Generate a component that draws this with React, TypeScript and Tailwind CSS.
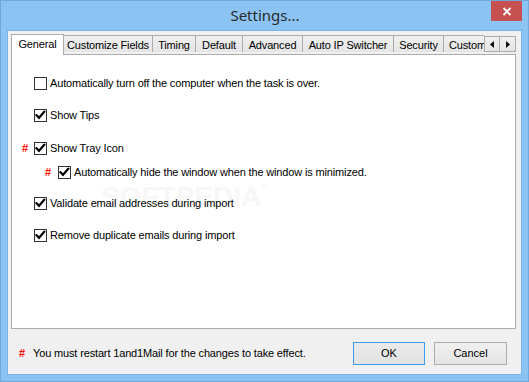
import React from "react";

const font = { fontFamily: '"Liberation Sans", Arial, sans-serif' };

function Check({ checked }: { checked: boolean }) {
  return (
    <div className="w-[13px] h-[13px] border border-[#333333] bg-white flex items-center justify-center shrink-0">
      {checked && (
        <svg width="11" height="11" viewBox="0 0 11 11">
          <path d="M1.5 5.2 L4 7.8 L9.2 1.8" fill="none" stroke="#000" strokeWidth="2.2" strokeLinecap="square" strokeLinejoin="miter" />
        </svg>
      )}
    </div>
  );
}

function Mark({ w }: { w: string }) {
  return <span className={`${w} text-[#ff0000] font-bold text-[11px] leading-none shrink-0`}>#</span>;
}

function Row({
  label,
  checked,
  pad,
  mark,
  mt,
}: {
  label: string;
  checked: boolean;
  pad: string;
  mark?: string;
  mt: string;
}) {
  return (
    <div className={`flex items-center h-[13px] ${pad} ${mt}`}>
      {mark && <Mark w={mark} />}
      <Check checked={checked} />
      <span className="ml-[3px] text-[11px] leading-none tracking-[-0.15px] text-black whitespace-nowrap">{label}</span>
    </div>
  );
}

function Tab({ label, w }: { label: string; w: string }) {
  return (
    <div
      className={`${w} h-[17px] shrink-0 border-t border-r border-[#acacac] bg-gradient-to-b from-[#f0f0f0] to-[#e5e5e5] flex items-center justify-center text-[11px] leading-none tracking-[-0.15px] text-black whitespace-nowrap pt-[2px]`}
    >
      {label}
    </div>
  );
}

export default function App() {
  return (
    <div
      className="w-[529px] h-[382px] bg-[#8bc4f3] border border-[#6fa9dc] flex flex-col select-none"
      style={font}
    >
      {/* Title bar */}
      <div className="h-[29px] relative flex items-center justify-center shrink-0">
        <span
          className="text-[15px] text-[#2a2a2a] leading-none pb-[1px] pl-[1px]"
          style={{ fontFamily: '"Noto Sans", "Open Sans", sans-serif' }}
        >
          Settings...
        </span>
        <div className="absolute top-0 right-[6px] w-[31px] h-[20px] bg-[#c75050] flex items-center justify-center">
          <svg width="10" height="9" viewBox="0 0 10 9">
            <path d="M1.5 1 L8.5 8 M8.5 1 L1.5 8" stroke="#fff" strokeWidth="1.8" />
          </svg>
        </div>
      </div>

      {/* Client area */}
      <div className="mx-[6px] mb-[6px] flex-1 border border-[#79b4e6] bg-[#f0f0f0] flex flex-col">
        <div className="pt-[3px] pl-[3px] pr-[5px] flex flex-col">
          {/* Tab strip */}
          <div className="h-[20px] flex items-end">
            <div className="w-[473px] h-[21px] flex items-end overflow-hidden -mb-[1px] relative z-10">
              <div className="w-[53px] h-[21px] shrink-0 border-l border-t border-r border-[#acacac] bg-white flex items-start justify-center pt-[4px] text-[11px] leading-none tracking-[-0.15px] text-black">
                General
              </div>
              <div className="h-[20px] flex items-start">
                <div className="flex">
                  <Tab label="Customize Fields" w="w-[89px]" />
                  <Tab label="Timing" w="w-[43px]" />
                  <Tab label="Default" w="w-[47px]" />
                  <Tab label="Advanced" w="w-[60px]" />
                  <Tab label="Auto IP Switcher" w="w-[91px]" />
                  <Tab label="Security" w="w-[50px]" />
                  <div className="w-[60px] h-[17px] shrink-0 border-t border-[#acacac] bg-gradient-to-b from-[#f0f0f0] to-[#e5e5e5] flex items-center pl-[5px] text-[11px] leading-none tracking-[-0.15px] text-black whitespace-nowrap pt-[2px]">
                    Custom Fields
                  </div>
                </div>
              </div>
            </div>
            <div className="self-start mt-[2px] flex">
              <div className="w-[16px] h-[16px] border border-[#acacac] bg-gradient-to-b from-[#f0f0f0] to-[#e5e5e5] flex items-center justify-center">
                <svg width="4" height="7" viewBox="0 0 4 7">
                  <path d="M4 0 L0 3.5 L4 7 Z" fill="#000" />
                </svg>
              </div>
              <div className="w-[16px] h-[16px] border border-l-0 border-[#acacac] bg-gradient-to-b from-[#f0f0f0] to-[#e5e5e5] flex items-center justify-center">
                <svg width="4" height="7" viewBox="0 0 4 7">
                  <path d="M0 0 L4 3.5 L0 7 Z" fill="#000" />
                </svg>
              </div>
            </div>
          </div>

          {/* Panel */}
          <div className="h-[275px] border border-[#acacac] bg-white relative flex flex-col">
            <div className="absolute left-[89px] top-[128px] text-[28px] font-bold leading-none text-[#f7f7f7] whitespace-nowrap">
              SOFTPEDIA<span className="text-[8px] align-top">®</span>
            </div>
            <div className="relative flex flex-col">
              <Row label="Automatically turn off the computer when the task is over." checked={false} pad="pl-[22px]" mt="mt-[22px]" />
              <Row label="Show Tips" checked pad="pl-[22px]" mt="mt-[19px]" />
              <Row label="Show Tray Icon" checked pad="pl-[10px]" mark="w-[12px]" mt="mt-[20px]" />
              <Row label="Automatically hide the window when the window is minimized." checked pad="pl-[33px]" mark="w-[13px]" mt="mt-[11px]" />
              <Row label="Validate email addresses during import" checked pad="pl-[22px]" mt="mt-[18px]" />
              <Row label="Remove duplicate emails during import" checked pad="pl-[22px]" mt="mt-[19px]" />
            </div>
          </div>
        </div>

        {/* Bottom row */}
        <div className="mt-[13px] pl-[11px] pr-[14px] flex items-center h-[23px]">
          <Mark w="w-[14px]" />
          <span className="text-[11px] leading-none tracking-[-0.15px] text-black">
            You must restart 1and1Mail for the changes to take effect.
          </span>
          <div className="flex-1" />
          <div className="w-[72px] h-[23px] border border-[#3c9bf0] bg-gradient-to-b from-[#eaeaea] to-[#e2e2e2] flex items-center justify-center text-[11px] leading-none text-black">
            OK
          </div>
          <div className="ml-[9px] w-[73px] h-[23px] border border-[#acacac] bg-gradient-to-b from-[#f0f0f0] to-[#e5e5e5] flex items-center justify-center text-[11px] leading-none text-black">
            Cancel
          </div>
        </div>
      </div>
    </div>
  );
}
